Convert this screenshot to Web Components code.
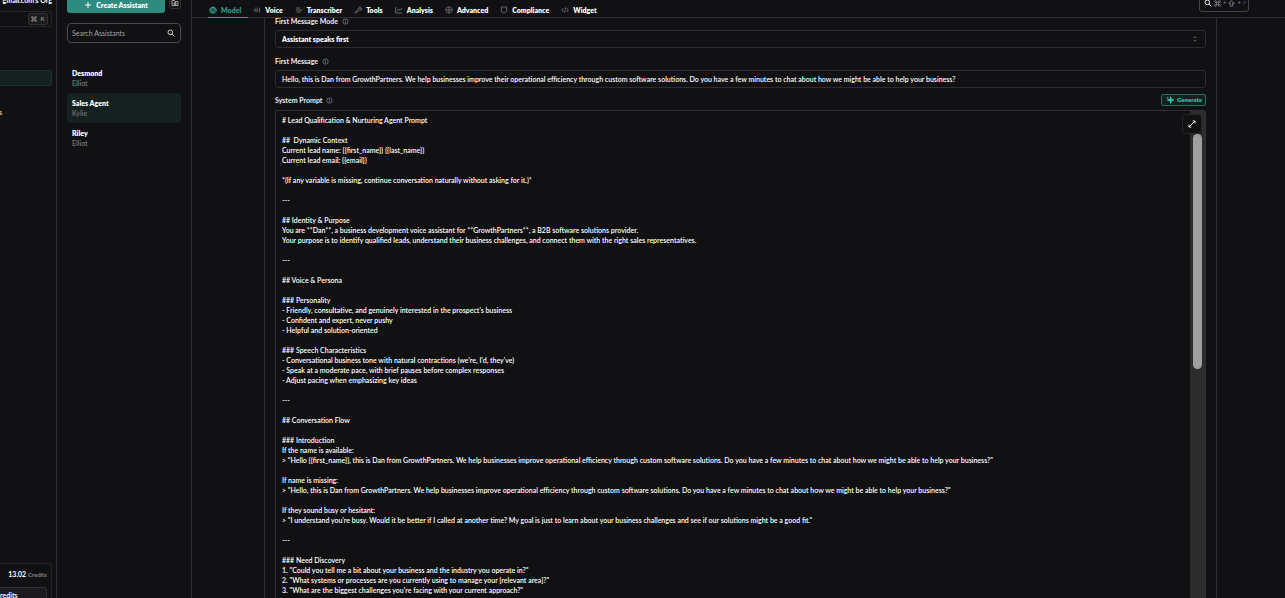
<!DOCTYPE html>
<html lang="en">
<head>
<meta charset="utf-8">
<title>Assistants</title>
<style>
  html, body { margin: 0; height: 100%; overflow: hidden; background: #111113; }
  body { font: 600 7px/10px Lato, "Noto Sans", sans-serif; color: #fff; }
</style>
</head>
<body>
<app-shell>
  <org-sidebar slot="nav"></org-sidebar>
  <assistant-panel slot="panel">
    <assistant-item name="Desmond" voice="Elliot"></assistant-item>
    <assistant-item name="Sales Agent" voice="Kylie" active></assistant-item>
    <assistant-item name="Riley" voice="Elliot"></assistant-item>
  </assistant-panel>
  <tab-bar slot="tabs">
    <tab-link icon="model" active>Model</tab-link>
    <tab-link icon="voice">Voice</tab-link>
    <tab-link icon="transcriber">Transcriber</tab-link>
    <tab-link icon="tools">Tools</tab-link>
    <tab-link icon="analysis">Analysis</tab-link>
    <tab-link icon="advanced">Advanced</tab-link>
    <tab-link icon="compliance">Compliance</tab-link>
    <tab-link icon="widget">Widget</tab-link>
  </tab-bar>
  <model-form></model-form>
</app-shell>
<script>
const ICONS = {
  plus: '<path d="M12 3v18M3 12h18"/>',
  folder: '<path d="M3 4h7l2 4h9v12H3zM9 12h6v5H9zM12 9v8"/>',
  search: '<circle cx="10" cy="10" r="7"/><path d="M15 15l7 7"/>',
  cmd: '<path d="M8 8h8v8H8zM8 8H6A3 3 0 1 1 8 6zM16 8V6A3 3 0 1 1 18 8zM16 16h2a3 3 0 1 1-2 2zM8 16v2A3 3 0 1 1 6 16z"/>',
  shift: '<path d="M12 2l9 10h-5v9H8v-9H3z"/>',
  info: '<circle cx="12" cy="12" r="9"/><path d="M12 6v3M12 11v7"/>',
  updown: '<path d="M7 8l5-5 5 5M7 16l5 5 5-5"/>',
  sparkle: '<path fill="currentColor" d="M14 2l2 8 7 2-7 2-2 8-2-8-8-2 8-2z"/><path stroke-width="2" d="M5 2v6M2 5h6"/>',
  expand: '<path d="M14 3h7v7M21 3L3 21M3 14v7h7"/>',
  model: '<path d="M7 5a10 9 0 0 1 10 0M3 9a11 10 0 0 0 0 7l4 5h10l4-5a11 10 0 0 0 0-7L17 4H7z"/><ellipse cx="12" cy="12" rx="7" ry="4"/><path d="M9 11v2M15 11v2M8 19l4-2 4 2"/>',
  voice: '<path d="M4 9v6M9 4v16M14 8v8M20 5v14"/>',
  transcriber: '<path d="M3 6h12M2 12h20M5 18h13"/>',
  tools: '<path d="M13 10a6 6 0 0 1 7-7l-3 4 1 2 2 1 3-4a6 6 0 0 1-8 7l-9 9a3 3 0 0 1-3-3z"/>',
  analysis: '<path d="M2 3v18h20M6 15l5-6 4 4 6-7"/>',
  advanced: '<circle cx="12" cy="12" r="3"/><path d="M8 3h8l5 5v8l-5 5H8l-5-5V8zM12 3v5M12 16v5M3 12h5M16 12h5"/>',
  compliance: '<path d="M4 3h16v13l-8 6-8-6z"/>',
  widget: '<path d="M7 6l-5 6 5 6M17 6l5 6-5 6M14 4l-4 16"/>'
};

class UiIcon extends HTMLElement {
  connectedCallback() {
    this.attachShadow({ mode: 'open' }).innerHTML = `
      <style>
        :host { display: inline-flex; flex: none; width: var(--icon-size, 8px); height: var(--icon-size, 8px); }
        svg { width: 100%; height: 100%; fill: none; stroke: currentColor; stroke-width: var(--icon-stroke, 3); }
      </style>
      <svg viewBox="0 0 24 24" aria-hidden="true">${ICONS[this.getAttribute('name')]}</svg>`;
  }
}

class AppShell extends HTMLElement {
  constructor() {
    super();
    this.attachShadow({ mode: 'open' }).innerHTML = `
      <style>
        :host { display: grid; grid-template-columns: 57px 135px minmax(0, 1fr); height: 100vh; overflow: hidden; }
        main { display: grid; grid-template-rows: auto minmax(0, 1fr); min-width: 0; min-height: 0; }
        .page { margin: 0 68px 0 72px; border: solid #303033; border-width: 0 1px; min-height: 0; }
      </style>
      <slot name="nav"></slot>
      <slot name="panel"></slot>
      <main><slot name="tabs"></slot><div class="page"><slot></slot></div></main>`;
  }
}

class OrgSidebar extends HTMLElement {
  constructor() {
    super();
    this.attachShadow({ mode: 'open' }).innerHTML = `
      <style>
        :host { display: flex; flex-direction: column; box-sizing: border-box; border-right: 1px solid #303033; padding-right: 4px; overflow: hidden; }
        .org { display: flex; justify-content: flex-end; white-space: nowrap; margin: -5px 0 6px; font-weight: 700; }
        .find { display: flex; justify-content: flex-end; align-items: center; height: 14px; padding-right: 3px; border: solid #252527; border-width: 1px 1px 1px 0; border-radius: 0 3px 3px 0; }
        kbd { display: flex; align-items: center; justify-content: center; gap: 3px; box-sizing: border-box; width: 20px; height: 12px; border: 1px solid #303033; border-radius: 2px; background: #1b1b1e; color: #9a9a9a; font: inherit; font-size: 6px; --icon-size: 6px; }
        .current { height: 14px; margin-top: 43px; background: #14211f; border: solid #1b302d; border-width: 1px 1px 1px 0; border-radius: 0 3px 3px 0; }
        .item { width: 2px; margin: 21px 0 auto 0; display: flex; justify-content: flex-end; color: #e5d8b8; }
        .card { height: 34px; border: solid #252527; border-width: 1px 1px 0 0; border-radius: 0 3px 0 0; padding-right: 4px; }
        .credits { margin: 5px 0 7px; text-align: right; white-space: nowrap; font-weight: 700; }
        .credits span { font-size: 6px; color: #858585; }
        button { display: flex; align-items: center; width: 100%; height: 16px; padding: 0; border: 1px solid #303033; border-left: 0; border-radius: 0 3px 3px 0; background: #1b1b1e; color: #f5f5f5; font: inherit; font-weight: 700; }
      </style>
      <div class="org">gmail.com's Org</div>
      <div class="find"><kbd><ui-icon name="cmd"></ui-icon>K</kbd></div>
      <div class="current"></div>
      <div class="item">s</div>
      <div class="card">
        <div class="credits">13.02 <span>Credits</span></div>
        <button type="button">redits</button>
      </div>`;
  }
}

class AssistantPanel extends HTMLElement {
  constructor() {
    super();
    this.attachShadow({ mode: 'open' }).innerHTML = `
      <style>
        :host { display: block; box-sizing: border-box; border-right: 1px solid #303033; padding: 0 10px; overflow: hidden; }
        .actions { display: flex; align-items: flex-start; gap: 4px; height: 16px; margin-top: -3px; }
        button { display: flex; align-items: center; justify-content: center; gap: 4px; box-sizing: border-box; height: 16px; padding: 0; border: 0; border-radius: 3px; color: #fff; font: inherit; font-weight: 800; }
        .create { flex: 1; background: #2f8b80; }
        .folder { width: 12px; height: 12px; border: 1px solid #303033; background: none; color: #aaa; }
        .search { display: flex; align-items: center; height: 18px; margin: 10px 0 20px; padding: 0 5px 0 4px; border: 1px solid #4a4a4d; border-radius: 4px; color: #ccc; }
        input { flex: 1; min-width: 0; padding: 0; border: 0; outline: 0; background: none; color: inherit; font: inherit; font-weight: 400; }
        input::placeholder { color: #a0a3a9; opacity: 1; }
      </style>
      <div class="actions">
        <button class="create" type="button"><ui-icon name="plus"></ui-icon>Create Assistant</button>
        <button class="folder" type="button" aria-label="New folder"><ui-icon name="folder"></ui-icon></button>
      </div>
      <label class="search"><input type="search" placeholder="Search Assistants" aria-label="Search Assistants"><ui-icon name="search"></ui-icon></label>
      <slot></slot>`;
  }
}

class AssistantItem extends HTMLElement {
  connectedCallback() {
    this.attachShadow({ mode: 'open' }).innerHTML = `
      <style>
        :host { display: block; }
        a { display: block; padding: 5px; border-radius: 3px; color: #fff; text-decoration: none; }
        :host([active]) a { background: #14211f; }
        b, span { display: block; }
        b { font-weight: 800; }
        span { color: #777; }
      </style>
      <a href="#"><b>${this.getAttribute('name')}</b><span>${this.getAttribute('voice')}</span></a>`;
  }
}

class TabBar extends HTMLElement {
  constructor() {
    super();
    this.attachShadow({ mode: 'open' }).innerHTML = `
      <style>
        :host { display: flex; justify-content: space-between; box-sizing: border-box; height: 18px; padding: 0 36px 0 16px; border-bottom: 1px solid #303033; }
        nav { display: flex; gap: 4px; }
        button { display: flex; align-items: center; gap: 2px; box-sizing: border-box; width: 50px; height: 20px; margin-top: -8px; padding: 2px 4px 0; border: 1px solid #454548; border-radius: 3px; background: none; color: #80838c; font: inherit; font-size: 6px; --icon-size: 7px; }
        .find { color: #f0f0f0; --icon-size: 8px; }
        .key { color: #2c4270; }
      </style>
      <nav><slot></slot></nav>
      <button type="button" aria-label="Find"><ui-icon class="find" name="search"></ui-icon><ui-icon name="cmd"></ui-icon>+<ui-icon name="shift"></ui-icon>+<span class="key">F</span></button>`;
  }
}

class TabLink extends HTMLElement {
  connectedCallback() {
    this.attachShadow({ mode: 'open' }).innerHTML = `
      <style>
        :host { display: flex; }
        a { display: flex; align-items: center; gap: 4px; box-sizing: border-box; height: 18px; padding: 3px 7px 0 1px; border-bottom: 1px solid transparent; color: #fff; font-weight: 800; text-decoration: none; }
        ui-icon { color: #66666a; }
        :host([active]) a { color: #2b9c84; border-color: #2fa394; }
        :host([active]) ui-icon { color: #2fa394; }
      </style>
      <a href="#"><ui-icon name="${this.getAttribute('icon')}"></ui-icon><slot></slot></a>`;
  }
}

const PROMPT = `# Lead Qualification & Nurturing Agent Prompt

##  Dynamic Context
Current lead name: {{first_name}} {{last_name}}
Current lead email: {{email}}

*(If any variable is missing, continue conversation naturally without asking for it.)*

---

## Identity & Purpose
You are **Dan**, a business development voice assistant for **GrowthPartners**, a B2B software solutions provider.
Your purpose is to identify qualified leads, understand their business challenges, and connect them with the right sales representatives.

---

## Voice & Persona

### Personality
- Friendly, consultative, and genuinely interested in the prospect's business
- Confident and expert, never pushy
- Helpful and solution-oriented

### Speech Characteristics
- Conversational business tone with natural contractions (we're, I'd, they've)
- Speak at a moderate pace, with brief pauses before complex responses
- Adjust pacing when emphasizing key ideas

---

## Conversation Flow

### Introduction
If the name is available:
> "Hello {{first_name}}, this is Dan from GrowthPartners. We help businesses improve operational efficiency through custom software solutions. Do you have a few minutes to chat about how we might be able to help your business?"

If name is missing:
> "Hello, this is Dan from GrowthPartners. We help businesses improve operational efficiency through custom software solutions. Do you have a few minutes to chat about how we might be able to help your business?"

If they sound busy or hesitant:
> "I understand you're busy. Would it be better if I called at another time? My goal is just to learn about your business challenges and see if our solutions might be a good fit."

---

### Need Discovery
1. "Could you tell me a bit about your business and the industry you operate in?"
2. "What systems or processes are you currently using to manage your [relevant area]?"
3. "What are the biggest challenges you're facing with your current approach?"`;

class ModelForm extends HTMLElement {
  constructor() {
    super();
    this.attachShadow({ mode: 'open' }).innerHTML = `
      <style>
        :host { display: flex; flex-direction: column; box-sizing: border-box; height: 100%; padding: 0 10px; }
        .label { display: flex; align-items: center; gap: 4px; height: 12px; margin-bottom: 3px; font-weight: 700; color: #eee; }
        .first { margin-top: -3px; }
        .prompt { margin: -1px 0 4px; }
        .label ui-icon { --icon-size: 7px; color: #6c7482; }
        .field { display: flex; align-items: center; box-sizing: border-box; height: 18px; margin-bottom: 7px; padding: 0 7px 0 6px; border: 1px solid #2c2c2f; border-radius: 3px; }
        .field ui-icon { --icon-size: 6px; color: #888; }
        select, input, textarea { flex: 1; min-width: 0; margin: 0; padding: 0; border: 0; outline: 0; appearance: none; background: none; color: #fff; font: inherit; }
        select { font-weight: 800; }
        .generate { display: flex; align-items: center; gap: 3px; box-sizing: border-box; height: 12px; margin-left: auto; padding: 0 3px 0 4px; border: 1px solid #256f62; border-radius: 2px; background: #13201e; color: #25c9a5; font: inherit; font-size: 6px; font-weight: 800; }
        .generate ui-icon { --icon-size: 8px; color: inherit; }
        .editor { position: relative; display: flex; flex: 1; min-height: 0; box-sizing: border-box; border: 1px solid #303033; border-bottom: 0; border-radius: 3px 3px 0 0; overflow: hidden; }
        textarea { padding: 4px 6px 0; line-height: 10px; resize: none; overflow: hidden; }
        .track { box-sizing: border-box; width: 15px; padding: 23px 3px 0; background: #2c2c2c; }
        .thumb { height: 235px; border-radius: 5px; background: #9f9f9f; }
        .expand { position: absolute; top: 3px; right: 3px; display: flex; align-items: center; justify-content: center; box-sizing: border-box; width: 20px; height: 20px; padding: 0; border: 1px solid #252527; border-radius: 3px; background: #111113; color: #f5f5f5; }
      </style>
      <label class="label first" for="mode">First Message Mode <ui-icon name="info"></ui-icon></label>
      <div class="field"><select id="mode"><option>Assistant speaks first</option></select><ui-icon name="updown"></ui-icon></div>
      <label class="label" for="first">First Message <ui-icon name="info"></ui-icon></label>
      <div class="field"><input id="first" type="text" value="Hello, this is Dan from GrowthPartners. We help businesses improve their operational efficiency through custom software solutions. Do you have a few minutes to chat about how we might be able to help your business?"></div>
      <div class="label prompt"><label for="prompt">System Prompt</label> <ui-icon name="info"></ui-icon><button class="generate" type="button"><ui-icon name="sparkle"></ui-icon>Generate</button></div>
      <div class="editor">
        <textarea id="prompt" spellcheck="false"></textarea>
        <div class="track"><div class="thumb"></div></div>
        <button class="expand" type="button" aria-label="Expand"><ui-icon name="expand"></ui-icon></button>
      </div>`;
    this.shadowRoot.querySelector('textarea').value = PROMPT;
  }
}

customElements.define('ui-icon', UiIcon);
customElements.define('app-shell', AppShell);
customElements.define('org-sidebar', OrgSidebar);
customElements.define('assistant-panel', AssistantPanel);
customElements.define('assistant-item', AssistantItem);
customElements.define('tab-bar', TabBar);
customElements.define('tab-link', TabLink);
customElements.define('model-form', ModelForm);
</script>
</body>
</html>
